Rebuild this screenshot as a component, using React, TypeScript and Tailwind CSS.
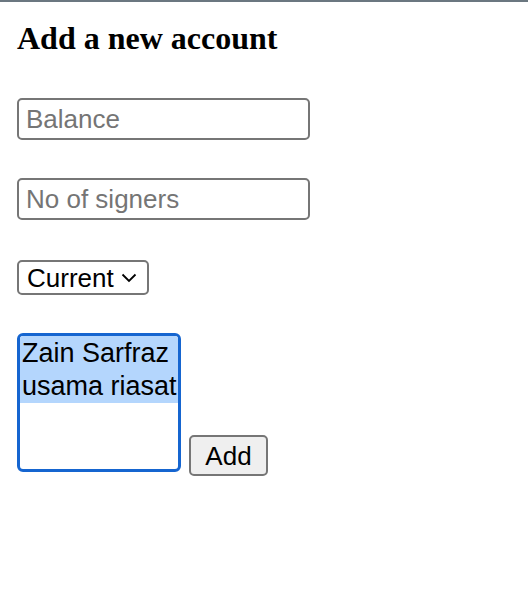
import React from "react";

export default function App() {
  return (
    <div className="min-h-[594px] bg-white" style={{ fontFamily: '"Liberation Sans", Arial, sans-serif' }}>
      <div className="h-[2px] bg-[#6b7780]" />
      <div className="px-[17px]">
        <h3
          className="mt-[17px] text-[32px] leading-[38px] font-bold text-black"
          style={{ fontFamily: '"Liberation Serif", "Times New Roman", serif' }}
        >
          Add a new account
        </h3>
        <div className="mt-[41px]">
          <input
            placeholder="Balance"
            className="block w-[293px] h-[42px] px-[7px] border-2 border-[#767676] rounded-[5px] text-[26px] text-black placeholder:text-[#757575] outline-none"
          />
        </div>
        <div className="mt-[38px]">
          <input
            placeholder="No of signers"
            className="block w-[293px] h-[42px] px-[7px] border-2 border-[#767676] rounded-[5px] text-[26px] text-black placeholder:text-[#757575] outline-none"
          />
        </div>
        <div className="mt-[40px]">
          <div className="flex items-center gap-[7px] w-[132px] h-[35px] border-2 border-[#767676] rounded-[5px] pl-[8px] text-[26px] leading-none text-black">
            <span>Current</span>
            <svg viewBox="0 0 16 10" className="block w-[16px] h-[10px] shrink-0">
              <path d="M1.5 1.5 L8 8 L14.5 1.5" fill="none" stroke="#000" strokeWidth="1.8" />
            </svg>
          </div>
        </div>
        <div className="mt-[38px] flex items-end">
          <div className="w-[164px] h-[139px] border-[3px] border-[#1565d0] rounded-[6px] overflow-hidden text-[27px] text-black">
            <div className="bg-[#b4d6fd] h-[34px] leading-[34px] pl-[2px] whitespace-nowrap">Zain Sarfraz</div>
            <div className="bg-[#b4d6fd] h-[33px] leading-[33px] pl-[2px] whitespace-nowrap">usama riasat</div>
          </div>
          <button className="ml-[8px] mb-[-4px] w-[79px] h-[41px] bg-[#efefef] border-2 border-[#767676] rounded-[5px] text-[26px] text-black leading-none">
            Add
          </button>
        </div>
      </div>
    </div>
  );
}
